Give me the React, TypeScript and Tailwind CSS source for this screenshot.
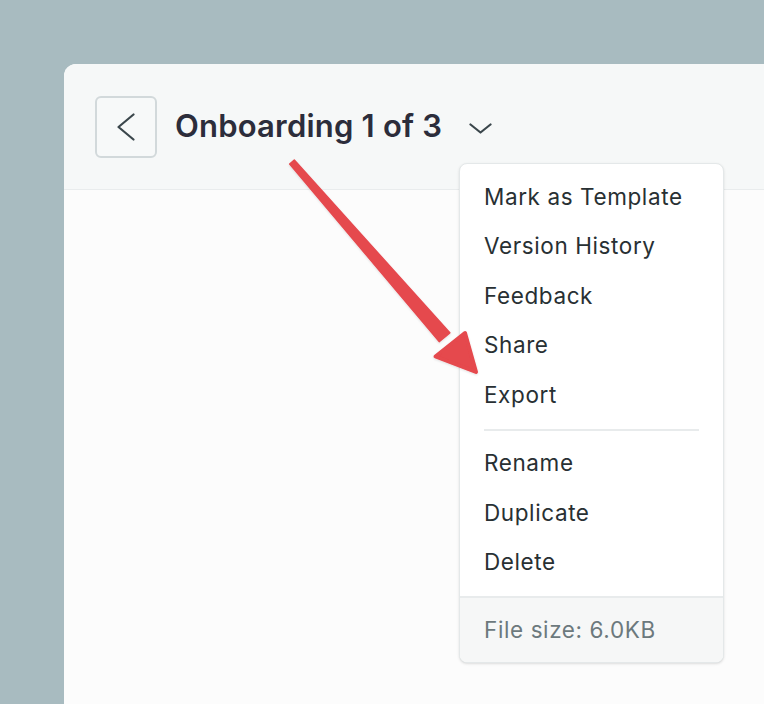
const GROUPS = [
  ['Mark as Template', 'Version History', 'Feedback', 'Share', 'Export'],
  ['Rename', 'Duplicate', 'Delete'],
]

function Arrow() {
  return (
    <svg className="pointer-events-none absolute left-0 top-0" width="764" height="704" aria-hidden="true">
      <defs>
        <filter id="arrow-shadow" x="-10%" y="-10%" width="120%" height="120%">
          <feDropShadow dx="0" dy="1" stdDeviation="1.2" floodColor="#000" floodOpacity="0.12" />
        </filter>
      </defs>
      <g fill="#e5484d" stroke="#e5484d" strokeLinejoin="round" filter="url(#arrow-shadow)">
        <polygon points="289.7,164 294.3,160 449.8,332.8 439.2,341.6" strokeWidth="1.5" />
        <polygon points="435.5,356.5 465,333 476,372" strokeWidth="4" />
      </g>
    </svg>
  )
}

export default function App() {
  return (
    <div
      className="relative h-[704px] w-[764px] overflow-hidden bg-[#a8bbc0] pl-16 pt-16"
      style={{ fontFamily: 'Inter, "Noto Sans", sans-serif' }}
    >
      <div className="flex h-full flex-col overflow-hidden rounded-tl-xl bg-[#fcfcfc]">
        <div className="flex h-[126px] shrink-0 items-center border-b border-[#e9eced] bg-[#f6f8f8] pl-[31px]">
          <button className="flex h-[62px] w-[62px] items-center justify-center rounded-md border-2 border-[#d2d9db] bg-[#f7f9f9] text-[#3b474c]">
            <svg width="20" height="28" viewBox="0 0 20 28" fill="none" stroke="currentColor" strokeWidth="2.2" strokeLinecap="round" strokeLinejoin="round">
              <polyline points="17.5,1.5 2.5,14 17.5,26.5" />
            </svg>
          </button>
          <h1 className="ml-[18px] text-[31px] font-semibold tracking-[0.2px] text-[#2c2d3b]">Onboarding 1 of 3</h1>
          <svg className="ml-[27px] mt-1 text-[#3b474c]" width="23" height="11" viewBox="0 0 23 11" fill="none" stroke="currentColor" strokeWidth="2.2" strokeLinecap="round" strokeLinejoin="round">
            <polyline points="1.5,1.5 11.5,9.5 21.5,1.5" />
          </svg>
        </div>
        <div className="flex-1" />
      </div>

      <div className="absolute left-[459px] top-[163px] w-[265px] overflow-hidden rounded-lg border border-[#e4e8e9] bg-white shadow-sm">
        <div className="pt-[8px]">
          {GROUPS[0].map((item) => (
            <div key={item} className="flex h-[49.5px] items-center px-6 text-[22.5px] tracking-[0.6px] text-[#283033]">
              {item}
            </div>
          ))}
        </div>
        <div className="mx-6 mt-[9px] h-[2px] bg-[#e8ebec]" />
        <div className="pb-[9px] pt-[8px]">
          {GROUPS[1].map((item) => (
            <div key={item} className="flex h-[49.5px] items-center px-6 text-[22.5px] tracking-[0.6px] text-[#283033]">
              {item}
            </div>
          ))}
        </div>
        <div className="flex h-[66px] items-center border-t-2 border-[#e8ebec] bg-[#f6f7f7] px-6 text-[22.5px] tracking-[0.6px] text-[#6c797d]">
          File size: 6.0KB
        </div>
      </div>

      <Arrow />
    </div>
  )
}
